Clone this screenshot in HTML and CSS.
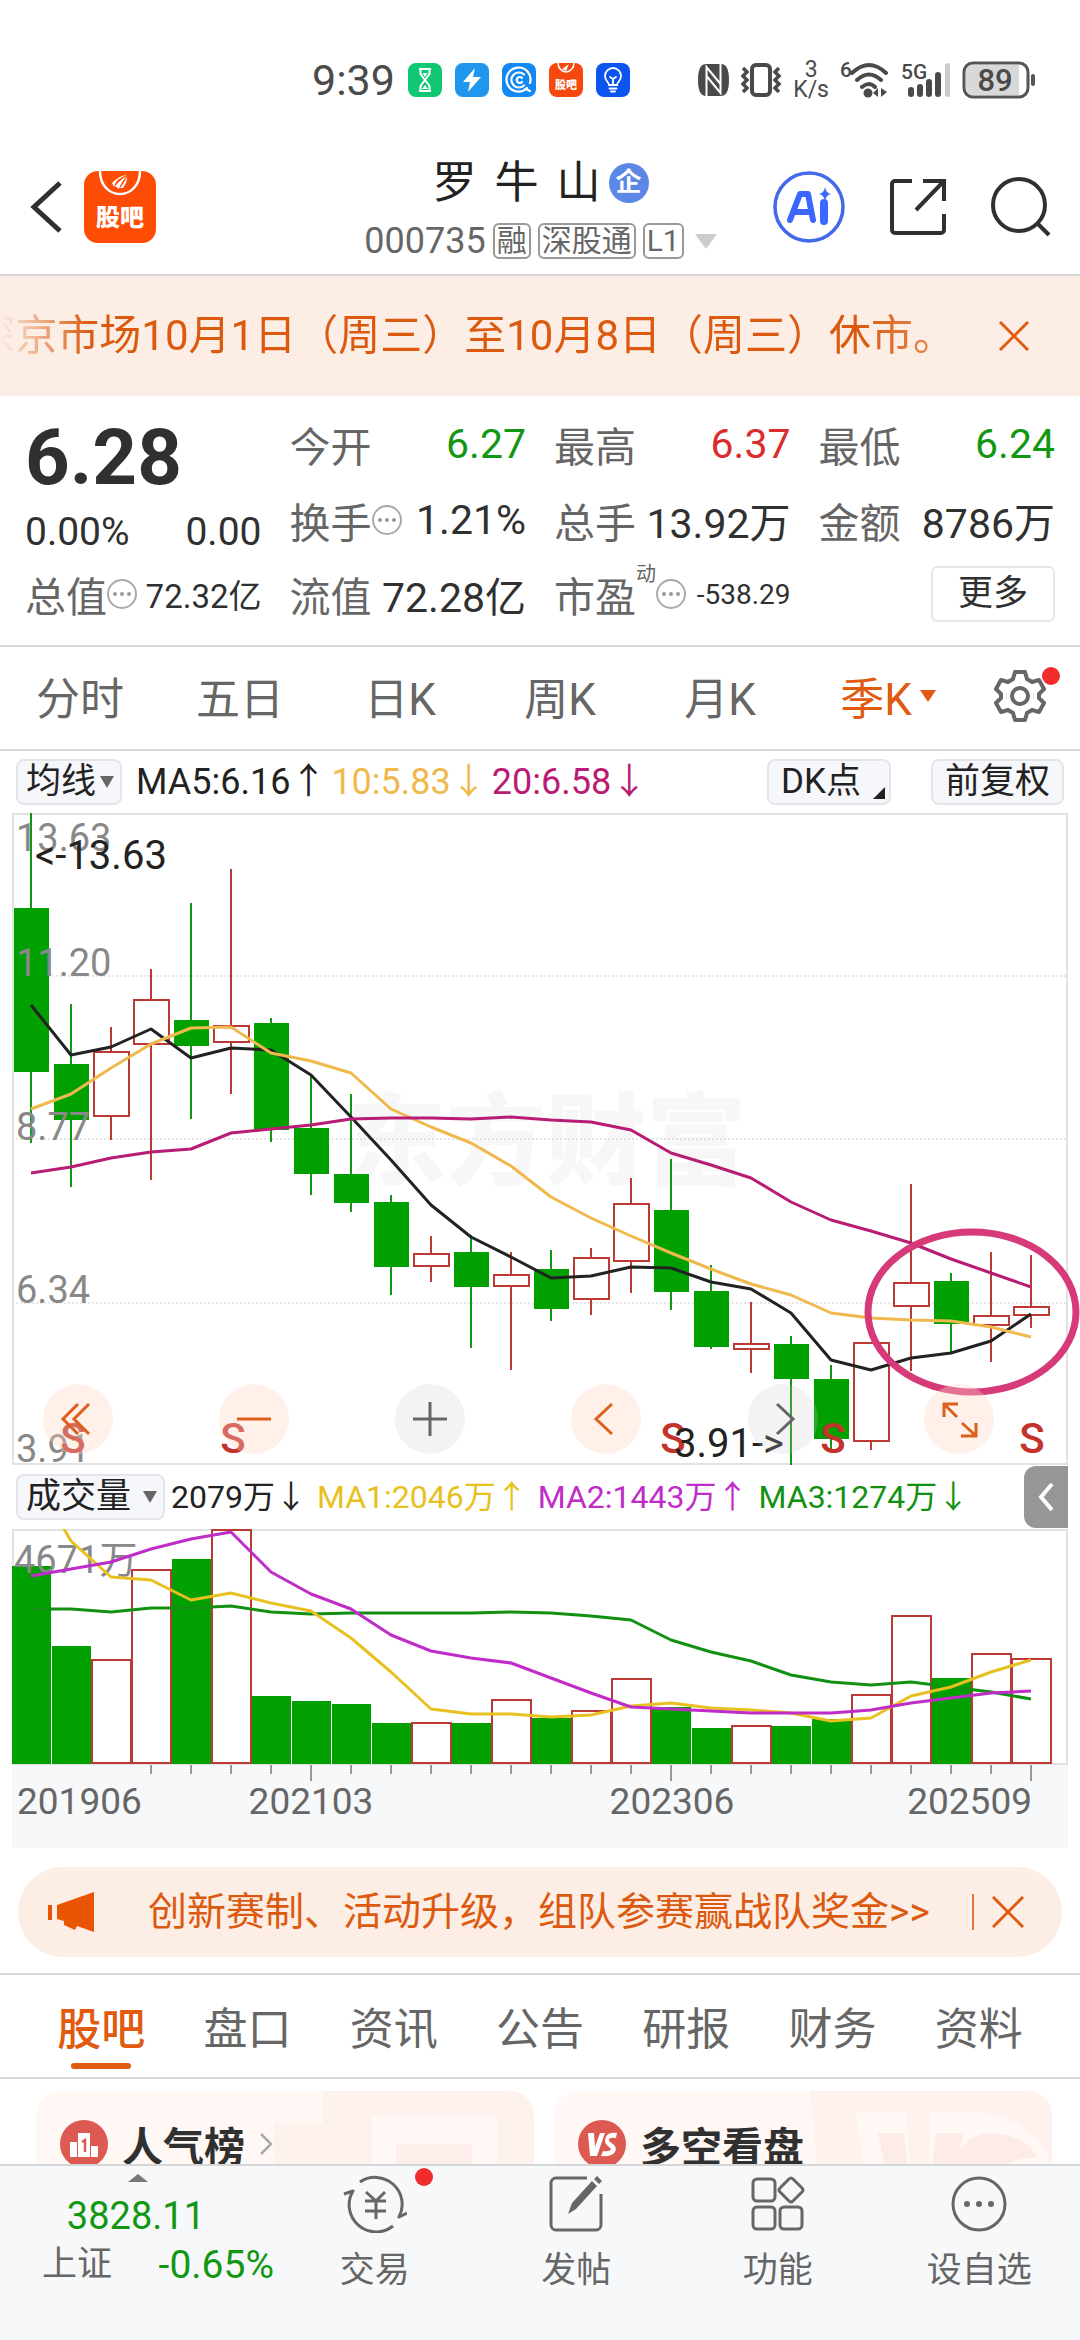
FILE: index.html
```html
<!DOCTYPE html>
<html lang="zh-CN">
<head>
<meta charset="utf-8">
<meta name="viewport" content="width=device-width, initial-scale=1">
<title>罗牛山 000735</title>
<link rel="stylesheet" href="styles.css">
</head>
<body>
<div class="app">
  <div class="status">
    <div class="status-left">
      <span class="clock">9:39</span>
      <svg width="34" height="34" viewBox="0 0 34 34"><rect width="34" height="34" rx="8" fill="#10c873"/><path d="M11 6h12M11 28h12M12.500 6.500v4.500l9 12v5M21.500 6.500v4.500l-9 12v5" fill="none" stroke="#fff" stroke-width="2"/><path d="M14.500 10h5l-2.500 4zM14 26l3-4 3 4z" fill="#fff"/></svg>
      <svg width="34" height="34" viewBox="0 0 34 34"><rect width="34" height="34" rx="8" fill="#2196ee"/><path d="M20 5 8 19h7l-2 10 13-15h-8z" fill="#fff"/></svg>
      <svg width="34" height="34" viewBox="0 0 34 34"><rect width="34" height="34" rx="8" fill="#1288f2"/><g fill="none" stroke="#fff" stroke-width="2.200" stroke-linecap="round"><path d="M25 25a12 12 0 1 1 3-5M24 26l4 2"/><path d="M22 11.500a7.500 7.500 0 1 0 0 11"/><path d="M20 15a3 3 0 1 0 0 4"/></g></svg>
      <svg width="34" height="34" viewBox="0 0 34 34"><rect width="34" height="34" rx="8" fill="#f4480c"/><path d="M9 0a8 9 0 0 0 16 0" fill="none" stroke="#fff" stroke-width="1.500"/><path d="M13 6 20 1l-3 7z" fill="#fff"/><text x="17" y="26" class="mini-logo">股吧</text></svg>
      <svg width="34" height="34" viewBox="0 0 34 34"><rect width="34" height="34" rx="8" fill="#0b55ee"/><path d="M13 22c0-3-4-4-4-9a8 8 0 0 1 16 0c0 5-4 6-4 9zM13.500 25.500h7M15 28.500h4M14 14l3 2 3-2M17 16v6" fill="none" stroke="#fff" stroke-width="1.800" stroke-linecap="round"/></svg>
    </div>
    <div class="status-right">
      <svg width="31" height="32" viewBox="0 0 31 32"><path d="M8 0H23q8 0 8 16t-8 16H8Q0 32 0 16T8 0z" fill="#4a4a4a"/><path d="M8.500 32V3l14 17M22.500 0v29l-14-17" fill="none" stroke="#fff" stroke-width="2"/></svg>
      <svg width="42" height="34" viewBox="0 0 42 34"><rect x="12" y="2" width="18" height="30" rx="4" fill="none" stroke="#4a4a4a" stroke-width="4"/><path d="M3 5l4 4-4 4 4 4-4 4 4 4-4 4M39 5l-4 4 4 4-4 4 4 4-4 4 4 4" fill="none" stroke="#4a4a4a" stroke-width="3.500"/></svg>
      <span class="speed"><span>3</span><span>K/s</span></span>
      <svg width="50" height="38" viewBox="0 0 50 38"><text x="0" y="16" class="net-num">6</text><g fill="none" stroke="#4a4a4a" stroke-width="4" stroke-linecap="round"><path d="M12 12Q29-4 46 12M17 19q12-11 24 0M22 26q7-6 13 0"/></g><circle cx="28" cy="32" r="4.500" fill="#4a4a4a"/><path d="m33 32 5-5v9zM41 27v9l6-5z" fill="#4a4a4a"/></svg>
      <svg width="50" height="38" viewBox="0 0 50 38"><text x="0" y="18" class="net-num">5G</text><g fill="#4a4a4a"><rect x="7" y="26" width="6" height="10" rx="3"/><rect x="16" y="23" width="6" height="13" rx="3"/><rect x="25" y="18" width="6" height="18" rx="3"/><rect x="34" y="11" width="6" height="25" rx="3"/></g><rect x="44" y="2" width="5" height="34" rx="2.500" fill="#ccc"/></svg>
      <svg width="74" height="38" viewBox="0 0 74 38"><rect x="2" y="2" width="64" height="34" rx="9" fill="#fff" stroke="#555" stroke-width="3"/><path d="M11 4h46v30H11a7 7 0 0 1-7-7V11a7 7 0 0 1 7-7z" fill="#d8d8d8"/><rect x="69" y="13" width="4" height="12" rx="2" fill="#555"/><text x="33" y="30" class="battery-num">89</text></svg>
    </div>
  </div>

  <main class="content">
    <header class="header">
      <div class="header-left">
        <button class="icon-btn" aria-label="返回"><svg width="32" height="54" viewBox="0 0 32 54"><path d="M30 3 4 27l26 24" fill="none" stroke="#303030" stroke-width="5"/></svg></button>
        <button class="icon-btn" aria-label="股吧"><svg width="72" height="72" viewBox="0 0 72 72"><rect width="72" height="72" rx="14" fill="#ff4c05"/><path d="M16 0c0 14 9 23 20 23S56 14 56 0" fill="none" stroke="#fff" stroke-width="2.500"/><path d="M28 12q8-8 15-8-12 4-13 12zM31 15q6-7 12-10-6 6-8 13zM36 17q4-5 7-11 0 6-4 11z" fill="#fff"/><text x="36" y="55" class="bar-logo">股吧</text></svg></button>
      </div>
      <div class="title-box">
        <h1 class="title"><span>罗</span> <span>牛</span> <span>山</span></h1>
        <div class="sub"><span class="code">000735</span><span class="tag">融</span><span class="tag">深股通</span><span class="tag">L1</span><i class="tri tri-sub"></i></div>
      </div>
      <div class="header-right">
        <button class="icon-btn" aria-label="Ai"><svg width="72" height="72" viewBox="0 0 72 72"><circle cx="36" cy="36" r="34" fill="none" stroke="#4169ea" stroke-width="3.500"/><path d="M17 49 27 23h8l5 26M22 41h14" fill="none" stroke="#3b66ff" stroke-width="6" stroke-linejoin="round" stroke-linecap="round"/><path d="M51 32v18" stroke="#3b66ff" stroke-width="8" stroke-linecap="round"/><path d="M52 16q1 6 6 7-5 1-6 7-1-6-6-7 5-1 6-7z" fill="#3b66ff"/></svg></button>
        <button class="icon-btn" aria-label="分享"><svg width="58" height="58" viewBox="0 0 58 58"><path d="M23 3H6a3 3 0 0 0-3 3v46a3 3 0 0 0 3 3h46a3 3 0 0 0 3-3V36M34 3h21v20M54 4 27 32" fill="none" stroke="#303030" stroke-width="4"/></svg></button>
        <button class="icon-btn" aria-label="搜索"><svg width="60" height="60" viewBox="0 0 60 60"><circle cx="28" cy="28" r="26" fill="none" stroke="#303030" stroke-width="4"/><path d="m46 46 12 12" stroke="#303030" stroke-width="4"/></svg></button>
      </div>
    </header>

    <div class="notice">
      <p class="notice-text">深京市场10月1日（周三）至10月8日（周三）休市。</p>
      <button class="icon-btn" aria-label="关闭"><svg width="30" height="30" viewBox="0 0 30 30"><path d="m1 1 28 28M29 1 1 29" stroke="#e05a10" stroke-width="3"/></svg></button>
    </div>

    <section class="quote">
      <div class="col">
        <div class="price">6.28</div>
        <div class="row change"><span>0.00%</span><span>0.00</span></div>
        <div class="row last"><span class="label">总值</span><i class="dots"></i><span class="val mid">72.32亿</span></div>
      </div>
      <div class="col">
        <div class="row"><span class="label">今开</span><span class="val green">6.27</span></div>
        <div class="row"><span class="label">换手</span><i class="dots"></i><span class="val">1.21%</span></div>
        <div class="row last"><span class="label">流值</span><span class="val">72.28亿</span></div>
      </div>
      <div class="col">
        <div class="row"><span class="label">最高</span><span class="val red">6.37</span></div>
        <div class="row"><span class="label">总手</span><span class="val">13.92万</span></div>
        <div class="row last"><span class="label">市盈</span><span class="sup">动</span><i class="dots"></i><span class="val small">-538.29</span></div>
      </div>
      <div class="col">
        <div class="row"><span class="label">最低</span><span class="val green">6.24</span></div>
        <div class="row"><span class="label">金额</span><span class="val">8786万</span></div>
        <div class="row last"><button class="more">更多</button></div>
      </div>
    </section>

    <nav class="periods">
      <button>分时</button><button>五日</button><button>日K</button><button>周K</button><button>月K</button><button class="on">季K<i class="tri tri-on"></i></button>
      <button class="gear" aria-label="设置"><svg width="52" height="52" viewBox="0 0 52 52"><path d="M21 2h10l2 7 5 3 7-2 5 9-5 5v4l5 5-5 9-7-2-5 3-2 7H21l-2-7-5-3-7 2-5-9 5-5v-4l-5-5 5-9 7 2 5-3z" fill="none" stroke="#666" stroke-width="4" stroke-linejoin="round"/><circle cx="26" cy="26" r="8" fill="none" stroke="#666" stroke-width="4"/></svg><i class="dot"></i></button>
    </nav>

    <div class="legend">
      <button class="chip">均线<i class="tri tri-chip"></i></button>
      <span class="ma c-black">MA5:6.16↑</span><span class="ma c-yellow">10:5.83↓</span><span class="ma c-magenta">20:6.58↓</span>
      <button class="chip chip-dk">DK点<i class="corner"></i></button>
      <button class="chip">前复权</button>
    </div>

    <div class="chart">
      <svg id="price" class="plot price-plot" viewBox="0 0 1056 652"></svg>
      <div class="tools">
        <button class="tool" aria-label="最早"><svg viewBox="0 0 70 70"><path d="M35 20 20 35l15 15M46 20 31 35l15 15"/></svg></button>
        <button class="tool" aria-label="缩小"><svg viewBox="0 0 70 70"><path d="M18 35h34"/></svg></button>
        <button class="tool off" aria-label="放大"><svg viewBox="0 0 70 70"><path d="M18 35h34M35 18v34"/></svg></button>
        <button class="tool" aria-label="左移"><svg viewBox="0 0 70 70"><path d="M41 20 25 35l16 15"/></svg></button>
        <button class="tool off" aria-label="右移"><svg viewBox="0 0 70 70"><path d="m29 20 16 15-16 15"/></svg></button>
        <button class="tool" aria-label="全屏"><svg viewBox="0 0 70 70"><path d="M20 33V20h14M21 21l12 12M52 39v13H37M51 51 38 39"/></svg></button>
      </div>
    </div>

    <div class="legend vol-legend">
      <button class="chip chip-vol">成交量<i class="tri tri-chip"></i></button>
      <span class="c-black">2079万↓</span><span class="c-gold">MA1:2046万↑</span><span class="c-violet">MA2:1443万↑</span><span class="c-green">MA3:1274万↓</span>
      <button class="fold" aria-label="展开"><svg width="16" height="30" viewBox="0 0 16 30"><path d="M14 2 3 15l11 13" fill="none" stroke="#fff" stroke-width="4"/></svg></button>
    </div>

    <div class="chart">
      <svg id="volume" class="plot" viewBox="0 0 1056 236"></svg>
      <svg id="axis" class="plot axis" viewBox="0 0 1056 83"></svg>
    </div>

    <div class="promo">
      <svg width="46" height="40" viewBox="0 0 46 40"><path d="M0 13h4v15H0zM9 13 46 0v40l-17-6-2 4-11-5v-4l-7-2z" fill="#ea5504"/></svg>
      <a class="promo-text" href="#">创新赛制、活动升级，组队参赛赢战队奖金&gt;&gt;</a>
      <i class="bar"></i>
      <button class="icon-btn" aria-label="关闭"><svg width="32" height="32" viewBox="0 0 32 32"><path d="m1 1 30 30M31 1 1 31" stroke="#e05a10" stroke-width="3"/></svg></button>
    </div>

    <nav class="tabs">
      <button class="on">股吧</button><button>盘口</button><button>资讯</button><button>公告</button><button>研报</button><button>财务</button><button>资料</button>
    </nav>

    <section class="cards">
      <a class="card" href="#">
        <svg width="48" height="48" viewBox="0 0 48 48"><circle cx="24" cy="24" r="24" fill="#dc5a52"/><path d="M10 22h7v15h-7zM18 13h12v24H18zM31 26h7v11h-7z" fill="#fff"/><path d="m22 22 3-2v12" fill="none" stroke="#dc5a52" stroke-width="2.500"/></svg>
        <strong>人气榜</strong>
        <svg width="14" height="24" viewBox="0 0 14 24"><path d="m2 2 10 10L2 22" fill="none" stroke="#aaa" stroke-width="2.500"/></svg>
        <svg class="deco" width="260" height="120" viewBox="0 0 260 120"><path d="M49 0h211v120H0V32h49z" fill="#fef2ef"/><path d="M98 25h125v95H98z" fill="#fff8f5"/><path d="M122 53h76v67h-76z" fill="#fdeeeb"/></svg>
      </a>
      <a class="card" href="#">
        <svg width="48" height="48" viewBox="0 0 48 48"><circle cx="24" cy="24" r="24" fill="#dc5a52"/><path d="M10 13h6l1 14 5-14h5l-8 23h-7zM39 13l-1 5q-8-1-7 3l5 4q3 3 1 7-3 5-14 4l2-5q7 1 8-2l-5-5q-2-3 0-7 2-5 11-4z" fill="#fff"/></svg>
        <strong>多空看盘</strong>
        <svg class="deco" width="242" height="120" viewBox="0 0 242 120"><path d="M0 0h242v120H12z" fill="#fef1ee"/><path d="M46 22h50l8 98H60zM120 22h60q60 20 62 60v38H120z" fill="#fff8f5"/><path d="M68 42h26l9 78H84zM126 42h28l-22 78h-16zM178 42q36 0 50 25-46-4-56 53h-30q-10-70 36-78z" fill="#fdebe8"/></svg>
      </a>
    </section>
  </main>

  <footer class="dock">
    <a class="index" href="#"><i class="tri-up"></i><span class="index-val">3828.11</span><span class="index-row"><span>上证</span><span class="index-pct">-0.65%</span></span></a>
    <button class="dock-item"><svg width="64" height="58" viewBox="0 0 64 58"><g fill="none" stroke="#666" stroke-width="3" stroke-linejoin="round"><path d="M17 7A27 27 0 0 1 56 42l8-4M50 51A27 27 0 0 1 10 16l-9 3"/><path d="m23 17 10 9 9-9M22 26h21M22 36h21M33 26v18"/></g></svg>交易<i class="dot"></i></button>
    <button class="dock-item"><svg width="56" height="58" viewBox="0 0 56 58"><path d="M39 3H8a5 5 0 0 0-5 5v42a5 5 0 0 0 5 5h40a5 5 0 0 0 5-5V19" fill="none" stroke="#666" stroke-width="3"/><path d="m20 39 4-11L44 6l5 5-21 23zM46 4l3-3 5 5-3 3z" fill="#666"/></svg>发帖</button>
    <button class="dock-item"><svg width="54" height="58" viewBox="0 0 54 58"><g fill="none" stroke="#666" stroke-width="3"><rect x="2" y="4" width="22" height="22" rx="4"/><rect x="2" y="32" width="22" height="22" rx="4"/><rect x="29" y="32" width="22" height="22" rx="4"/><path d="M38 4q2-2 4 0l9 9q2 2 0 4l-9 9q-2 2-4 0l-9-9q-2-2 0-4z"/></g></svg>功能</button>
    <button class="dock-item"><svg width="58" height="58" viewBox="0 0 58 58"><circle cx="29" cy="29" r="26" fill="none" stroke="#666" stroke-width="3"/><g fill="#666"><circle cx="17" cy="29" r="3"/><circle cx="29" cy="29" r="3"/><circle cx="41" cy="29" r="3"/></g></svg>设自选</button>
  </footer>
</div>
<script src="chart.js"></script>
</body>
</html>
```
FILE: styles.css
```css
* { box-sizing: border-box; margin: 0; padding: 0; }
body { font-family: Roboto, "Noto Sans CJK SC", sans-serif; color: #303030; background: #fff; }
button { font: inherit; color: inherit; background: none; border: 0; }
a { color: inherit; text-decoration: none; }
i { font-style: normal; }
svg { display: block; flex: none; }
.app { display: flex; flex-direction: column; height: 100vh; }
.content { flex: 1; min-height: 0; overflow: hidden auto; scrollbar-width: none; }
.icon-btn { display: flex; align-items: center; justify-content: center; }

.status { display: flex; justify-content: space-between; align-items: center; padding: 56px 44px 4px 312px; height: 108px; }
.status-left { display: flex; align-items: center; gap: 13px; }
.clock { font-size: 43px; line-height: 48px; color: #4a4a4a; }
.status-right { display: flex; align-items: center; gap: 11px; }
.speed { display: flex; flex-direction: column; align-items: center; font-size: 23px; line-height: 20px; color: #4a4a4a; }
.mini-logo { font-size: 11px; font-weight: 900; fill: #fff; text-anchor: middle; }
.bar-logo { font-size: 24px; font-weight: 900; fill: #fff; text-anchor: middle; }
.net-num { font-size: 21px; font-weight: 500; fill: #4a4a4a; }
.battery-num { font-size: 31px; font-weight: 500; fill: #4a4a4a; text-anchor: middle; }

.header { display: grid; grid-template-columns: 1fr auto 1fr; align-items: center; padding: 32px 29px 0 30px; height: 168px; border-bottom: 2px solid #d8d8d8; }
.header-left { display: flex; align-items: center; gap: 22px; }
.header-right { display: flex; align-items: center; justify-content: flex-end; gap: 44px; }
.title-box { display: flex; flex-direction: column; align-items: center; gap: 8px; }
.title { display: flex; align-items: center; gap: 18px; font-size: 44px; font-weight: 400; line-height: 60px; color: #222; }
.title::after { content: "企"; width: 40px; height: 40px; margin-left: -10px; border-radius: 50%; background: #5b87e6; color: #fff; font-size: 26px; font-weight: 700; line-height: 38px; text-align: center; }
.sub { display: flex; align-items: center; gap: 7px; color: #666; }
.code { font-size: 36px; line-height: 40px; }
.tag { padding: 0 2px; border: 2px solid #999; border-radius: 6px; font-size: 30px; line-height: 32px; }
.tri { display: inline-block; border-style: solid; border-color: currentColor transparent transparent; }
.tri-sub { margin-left: 4px; border-width: 15px 11px 0; color: #ccc; }

.notice { display: flex; align-items: center; justify-content: space-between; height: 120px; padding-right: 51px; background: #fceee5; }
.notice-text { display: flex; justify-content: flex-end; width: 955px; overflow: hidden; white-space: nowrap; font-size: 42px; line-height: 60px; color: #dc5a10; mask-image: linear-gradient(90deg, transparent, #000 90px, #000 860px, rgba(0,0,0,.6)); }

.quote { display: grid; grid-template-columns: repeat(4, minmax(0, 1fr)); gap: 28px; padding: 10px 25px 15px; border-bottom: 2px solid #d8d8d8; }
.price { height: 100px; font-size: 78px; font-weight: 700; line-height: 104px; }
.row { display: flex; align-items: center; height: 76px; font-size: 41px; white-space: nowrap; }
.row.change { justify-content: space-between; height: 52px; font-size: 39px; }
.row.last { height: 72px; }
.label { font-size: 41px; color: #666; }
.val { margin-left: auto; }
.val.mid { font-size: 33px; }
.val.small { font-size: 28px; }
.sup { align-self: flex-start; font-size: 20px; line-height: 32px; color: #666; }
.dots { position: relative; width: 30px; height: 30px; border: 2px solid #aaa; border-radius: 50%; }
.dots::after { content: ""; position: absolute; left: 11px; top: 11px; width: 4px; height: 4px; border-radius: 50%; background: #999; box-shadow: -7px 0 #999, 7px 0 #999; }
.more { margin-left: auto; width: 124px; height: 56px; border: 2px solid #e6e6e6; border-radius: 6px; font-size: 35px; line-height: 48px; }
.green { color: #129712; }
.red { color: #d92c2c; }

.periods { display: grid; grid-template-columns: repeat(6, 4fr) 3fr; height: 104px; padding-bottom: 4px; border-bottom: 2px solid #d8d8d8; font-size: 44px; color: #666; }
.periods button { display: flex; align-items: center; justify-content: center; }
.periods .on { gap: 8px; padding-left: 16px; color: #e05a10; }
.tri-on { border-width: 12px 8px 0; }
.gear { position: relative; }
.dot { position: absolute; width: 18px; height: 18px; border-radius: 50%; background: #f02c2c; }
.gear .dot { right: 20px; top: 20px; }

.legend { display: flex; align-items: center; height: 62px; padding: 0 16px; font-size: 36px; line-height: 46px; white-space: nowrap; }
.chip { display: flex; align-items: center; height: 46px; padding: 0 12px; border: 2px solid #e3e5ea; border-radius: 8px; background: #f6f7fa; font-size: 35px; line-height: 42px; color: #222; }
.legend > .chip:first-child { margin-right: 14px; padding: 0 6px 0 8px; gap: 4px; }
.legend .ma { margin-right: 5px; }
.chip-dk { position: relative; margin: 0 40px 0 auto; padding: 0 28px 0 12px; }
.corner { position: absolute; right: 4px; bottom: 4px; border-style: solid; border-width: 0 0 12px 12px; border-color: transparent transparent #222; }
.tri-chip { border-width: 12px 7px 0; color: #666; }
.c-black { color: #222; } .c-yellow { color: #f0b94e; } .c-magenta { color: #b81c74; }
.c-gold { color: #e8c020; } .c-violet { color: #c02cc8; } .c-green { color: #129012; }

.chart { position: relative; padding: 0 12px; }
.plot { width: 100%; height: auto; overflow: hidden; }
.price-plot { overflow: visible; }
.frame { fill: none; stroke: #e2e2e2; stroke-width: 2; }
.grid { stroke: #ccc; stroke-width: 1; stroke-dasharray: 2 2; }
.up { fill: #fff; stroke: #bd3a34; stroke-width: 2; }
.down { fill: #00a000; stroke: none; }
.wick-up { stroke: #bd3a34; stroke-width: 2; }
.wick-down { stroke: #129712; stroke-width: 2; }
.line { fill: none; stroke-width: 3; stroke-linejoin: round; }
.scale { font-size: 38px; fill: #888; }
.mark { font-size: 40px; fill: #222; }
.signal { font-size: 42px; font-weight: 500; fill: #c4322c; text-anchor: middle; }
.watermark { font-size: 100px; font-weight: 900; fill: #f7f7f7; }
.circle { fill: none; stroke: #d63a78; stroke-width: 7; }
.axis { background: #f7f8fa; }
.axis line { stroke: #999; stroke-width: 2; }
.axis text { font-size: 37px; fill: #666; }

.tools { position: absolute; left: 4%; right: 8%; bottom: 11px; display: flex; justify-content: space-between; }
.tool { width: 70px; height: 70px; border-radius: 50%; background: rgba(255,215,195,.35); }
.tool path { fill: none; stroke: #dc5f1e; stroke-width: 3; }
.tool.off { background: rgba(200,200,200,.22); }
.tool.off path { stroke: #666; }

.vol-legend { gap: 10px; height: 64px; padding-right: 12px; font-size: 32px; }
.legend > .chip-vol:first-child { margin-right: -4px; gap: 12px; }
.fold { display: flex; align-items: center; justify-content: center; width: 44px; height: 62px; margin-left: auto; border-radius: 12px 0 0 12px; background: #969696; }

.promo { display: flex; align-items: center; height: 90px; margin: 19px 18px 16px; padding: 0 38px 0 30px; border-radius: 45px; background: #fceee5; }
.promo-text { flex: 1; margin-left: 54px; font-size: 39px; line-height: 60px; white-space: nowrap; color: #dc5a10; }
.bar { width: 2px; height: 36px; margin-right: 18px; background: #e0783c; }

.tabs { display: grid; grid-template-columns: repeat(7, 1fr); height: 106px; padding: 0 28px; border: solid #d8d8d8; border-width: 2px 0; font-size: 44px; color: #666; }
.tabs .on { position: relative; font-weight: 500; color: #e05a10; }
.tabs .on::after { content: ""; position: absolute; left: 50%; bottom: 8px; width: 60px; height: 6px; margin-left: -30px; border-radius: 3px; background: #e05a10; }

.cards { display: grid; grid-template-columns: 1fr 1fr; gap: 20px; padding: 12px 28px 24px 36px; }
.card { position: relative; display: flex; align-items: center; gap: 14px; height: 120px; padding: 0 24px 14px; border-radius: 24px; background: #fff8f5; overflow: hidden; font-size: 41px; }
.card > * { position: relative; z-index: 1; }
.card .deco { position: absolute; right: 0; top: 0; z-index: 0; }

.dock { display: grid; grid-template-columns: 274px repeat(4, 1fr); height: 176px; border-top: 2px solid #d4d6d8; background: #f7f8fa; color: #666; font-size: 35px; }
.dock-item { position: relative; display: flex; flex-direction: column; align-items: center; gap: 12px; padding-top: 9px; line-height: 52px; }
.dock-item .dot { left: 141px; top: 2px; }
.index { display: flex; flex-direction: column; align-items: flex-end; padding-top: 8px; }
.tri-up { margin-right: 126px; border-style: solid; border-width: 0 10px 8px; border-color: transparent transparent #777; }
.index-val { margin: 10px 69px 0 0; font-size: 38px; line-height: 48px; color: #129712; }
.index-row { display: flex; align-items: center; justify-content: space-between; width: 232px; line-height: 50px; }
.index-pct { font-size: 39px; color: #129712; }
```
FILE: chart.js
```js
// Each candle: [up, high, bodyTop, bodyBottom, low]
const candles = [
  [0,0,95,259,330],[0,191,251,307,374],[1,214,238,302,327],[1,156,186,230,367],[0,90,207,233,306],
  [1,56,212,228,281],[0,205,210,317,329],[0,262,315,361,382],[0,281,361,390,399],[0,382,389,454,482],
  [1,423,440,452,469],[0,422,439,474,535],[1,439,461,472,557],[0,437,456,496,508],[1,435,444,485,502],
  [1,365,390,447,480],[0,346,397,479,497],[0,452,478,534,536],[1,489,530,535,560],[0,523,531,566,652],
  [0,552,566,626,637],[1,529,529,627,637],[1,371,469,492,558],[0,460,468,511,540],[1,439,502,511,549],
  [1,442,493,501,515]
];
const ma5 = [192,242,234,216,245,235,237,262,304,347,392,424,444,465,463,454,455,469,476,500,547,557,545,540,528,501];
const ma10 = [296,281,255,231,215,214,240,248,260,296,314,330,353,384,405,423,440,456,471,482,500,505,507,508,514,524];
const ma20 = [360,354,345,339,336,320,316,312,306,305,305,306,304,307,309,317,340,352,365,389,407,418,430,446,460,474];
const vol = [37,117,131,41,30,1,167,172,175,194,194,194,171,189,182,150,178,199,197,197,190,166,87,149,125,130];
const vma1 = [-57,12,48,51,71,64,74,82,109,143,180,185,185,188,186,177,174,179,181,184,192,189,167,158,143,131];
const vma2 = [47,40,33,20,10,3,43,65,80,106,122,129,134,149,164,178,180,182,184,184,184,181,174,169,164,162];
const vma3 = [80,80,83,79,79,77,83,85,84,84,84,84,83,84,87,91,111,123,132,146,153,156,153,158,163,170];

const px = i => 19 + i * 40;
const line = (ys, color) =>
  `<polyline class="line" stroke="${color}" points="${ys.map((y, i) => px(i) + ',' + y).join(' ')}"/>`;
const text = (cls, x, y, s) => `<text class="${cls}" x="${x}" y="${y}">${s}</text>`;

let p = text('watermark', 334, 364, '东方财富');
p += [163, 326, 490].map(y => `<line class="grid" x1="0" x2="1056" y1="${y}" y2="${y}"/>`).join('');
p += '<rect class="frame" x="1" y="1" width="1054" height="650"/>';
candles.forEach(([up, hi, top, bot, lo], i) => {
  const x = px(i);
  const kind = up ? 'up' : 'down';
  p += `<line class="wick-${kind}" x1="${x}" x2="${x}" y1="${hi}" y2="${lo}"/>`;
  p += up
    ? `<rect class="up" x="${x - 17}" y="${top + 1}" width="35" height="${bot - top}"/>`
    : `<rect class="down" x="${x - 17}" y="${top}" width="35" height="${bot - top}"/>`;
});
p += line(ma5, '#222') + line(ma10, '#f0b94e') + line(ma20, '#b81c74');
p += [[38, '13.63'], [163, '11.20'], [327, '8.77'], [490, '6.34'], [649, '3.91']]
  .map(([y, s]) => text('scale', 4, y, s)).join('');
p += [61, 221, 661, 821, 1020].map(x => text('signal', x, 640, 'S')).join('');
p += text('mark', 23, 56, '&lt;-13.63') + text('mark', 662, 644, '3.91-&gt;');
p += '<ellipse class="circle" cx="960" cy="499" rx="104" ry="80"/>';
document.getElementById('price').innerHTML = p;

let v = '<rect class="frame" x="1" y="1" width="1054" height="234"/>';
vol.forEach((y, i) => {
  const x = px(i) - 19;
  v += candles[i][0]
    ? `<rect class="up" x="${x}" y="${y}" width="39" height="${234 - y}"/>`
    : `<rect class="down" x="${x}" y="${y}" width="39" height="${235 - y}"/>`;
});
v += text('scale', 2, 44, '4671万');
v += line(vma3, '#129012') + line(vma1, '#e8c020') + line(vma2, '#c02cc8');
document.getElementById('volume').innerHTML = v;

let a = '';
for (let i = 3; i < 26; i++) {
  a += `<line x1="${px(i)}" x2="${px(i)}" y1="0" y2="${[7, 16, 25].includes(i) ? 16 : 9}"/>`;
}
a += text('date', 5, 49, '201906');
a += '<text x="299" y="49" text-anchor="middle">202103</text><text x="660" y="49" text-anchor="middle">202306</text>';
a += '<text x="1020" y="49" text-anchor="end">202509</text>';
document.getElementById('axis').innerHTML = a;
```
